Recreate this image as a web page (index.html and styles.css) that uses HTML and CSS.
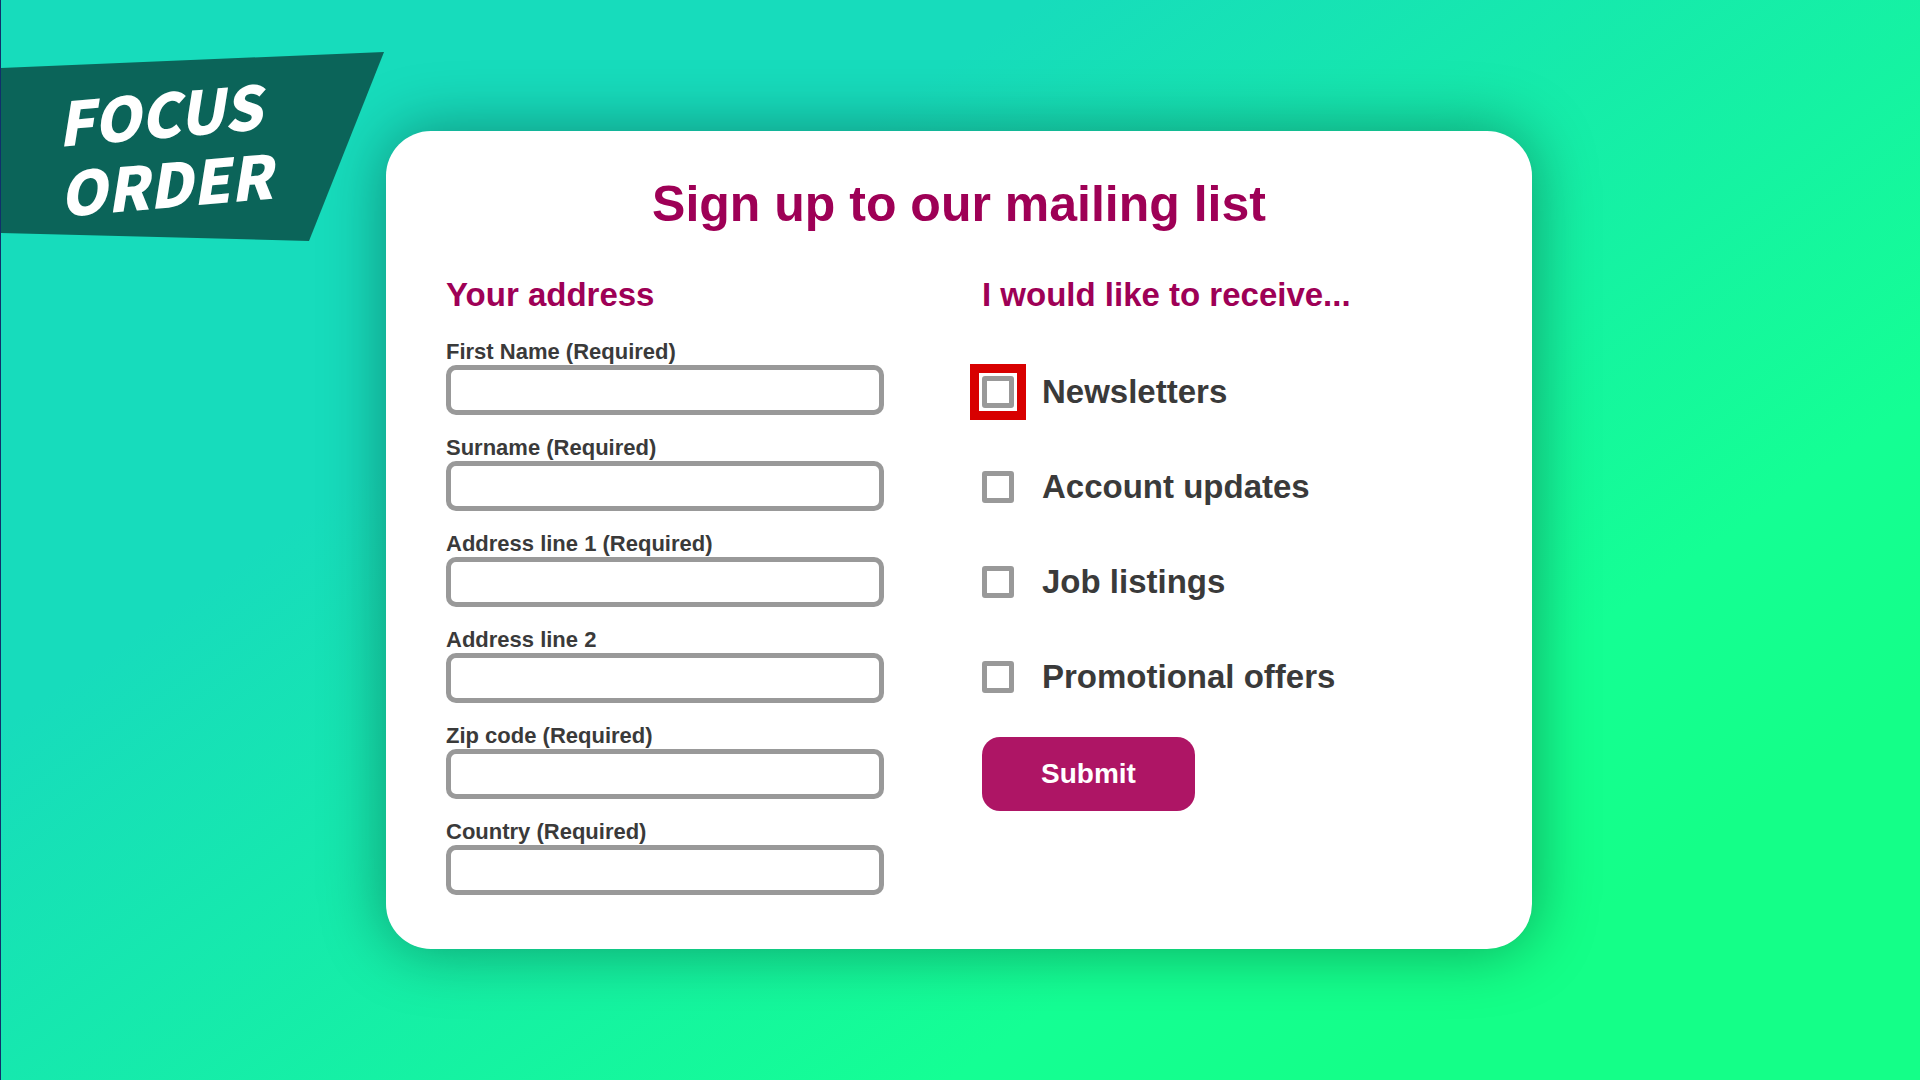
FILE: index.html
```html
<!DOCTYPE html>
<html lang="en">
<head>
    <meta charset="UTF-8">
    <meta name="viewport" content="width=device-width, initial-scale=1.0">
    <title>Focus Order</title>
    <link rel="stylesheet" href="styles.css">
</head>
<body>
    <!-- Corner banner -->
    <div class="banner">
        <div class="banner-text">FOCUS<br>ORDER</div>
    </div>

    <form class="card">
        <h1>Sign up to our mailing list</h1>

        <div class="columns">
            <!-- Address -->
            <section>
                <h2>Your address</h2>
                <div class="fields">
                    <div class="field">
                        <label for="firstName">First Name (Required)</label>
                        <input type="text" id="firstName">
                    </div>
                    <div class="field">
                        <label for="surname">Surname (Required)</label>
                        <input type="text" id="surname">
                    </div>
                    <div class="field">
                        <label for="address1">Address line 1 (Required)</label>
                        <input type="text" id="address1">
                    </div>
                    <div class="field">
                        <label for="address2">Address line 2</label>
                        <input type="text" id="address2">
                    </div>
                    <div class="field">
                        <label for="zip">Zip code (Required)</label>
                        <input type="text" id="zip">
                    </div>
                    <div class="field">
                        <label for="country">Country (Required)</label>
                        <input type="text" id="country">
                    </div>
                </div>
            </section>

            <!-- Preferences -->
            <section>
                <h2>I would like to receive...</h2>
                <div class="options">
                    <div class="option">
                        <input type="checkbox" id="newsletters" class="focused">
                        <label for="newsletters">Newsletters</label>
                    </div>
                    <div class="option">
                        <input type="checkbox" id="updates">
                        <label for="updates">Account updates</label>
                    </div>
                    <div class="option">
                        <input type="checkbox" id="jobs">
                        <label for="jobs">Job listings</label>
                    </div>
                    <div class="option">
                        <input type="checkbox" id="offers">
                        <label for="offers">Promotional offers</label>
                    </div>
                </div>
                <button type="button" class="btn-submit">Submit</button>
            </section>
        </div>
    </form>
</body>
</html>
```
FILE: styles.css
```css
* {
    box-sizing: border-box;
}

body {
    font-family: "Liberation Sans", Arial, Helvetica, sans-serif;
    font-weight: bold;
    color: #3a3a3a;
    background: linear-gradient(145deg, #17dcbc 0%, #17dcbc 30%, #14ff94 72%, #14ff88 84%);
    box-shadow: inset 1px 0 0 #10306b;
    margin: 0;
    padding-right: 2px;
    min-height: 100vh;
    display: flex;
    justify-content: center;
    align-items: center;
}

h1, h2 {
    margin: 0;
    color: #9e0056;
}

h1 {
    font-size: 50px;
    line-height: 60px;
    text-align: center;
}

h2 {
    font-size: 33px;
    line-height: 40px;
}

/* Banner pinned over the top left corner */
.banner {
    position: absolute;
    top: 52px;
    left: 1px;
    width: 383px;
    height: 189px;
    padding-right: 62px;
    display: flex;
    align-items: center;
    justify-content: center;
    background-color: #0b6459;
    clip-path: polygon(0 16px, 100% 0, 308px 100%, 0 181px);
}

.banner-text {
    font-family: "Noto Sans CJK JP", "Open Sans", sans-serif;
    font-size: 60px;
    font-weight: 900;
    line-height: 70px;
    font-style: italic;
    text-align: center;
    color: #fff;
    transform: rotate(-5deg);
}

.card {
    width: 90%;
    max-width: 1146px;
    padding: 43px 60px 54px;
    background-color: #fff;
    border-radius: 45px;
    box-shadow: 0 0 64px rgba(0, 0, 0, 0.36);
}

.columns {
    display: grid;
    grid-template-columns: 438fr 490fr;
    column-gap: 98px;
    margin-top: 41px;
}

.fields {
    display: flex;
    flex-direction: column;
    gap: 19px;
    margin-top: 23px;
}

.field label {
    display: block;
    font-size: 22px;
    line-height: 27px;
}

.field input {
    display: block;
    width: 100%;
    height: 50px;
    padding: 0 12px;
    font: inherit;
    font-size: 22px;
    border: 5px solid #999;
    border-radius: 10px;
    background-color: #fff;
}

.options {
    display: flex;
    flex-direction: column;
    gap: 55px;
    margin-top: 57px;
}

.option {
    display: flex;
    align-items: center;
    gap: 28px;
    font-size: 33px;
    line-height: 40px;
}

.option input {
    position: relative;
    appearance: none;
    width: 32px;
    height: 32px;
    margin: 0;
    border: 5px solid #999;
    border-radius: 3px;
    background-color: #fff;
}

/* Square focus ring around the rounded box */
.option .focused::after {
    content: "";
    position: absolute;
    inset: -17px;
    border: 9px solid #d80000;
}

.btn-submit {
    margin-top: 40px;
    padding: 21px 59px;
    font: inherit;
    font-size: 28px;
    line-height: 32px;
    color: #fff;
    background-color: #ae1565;
    border: none;
    border-radius: 18px;
    cursor: pointer;
}
```
